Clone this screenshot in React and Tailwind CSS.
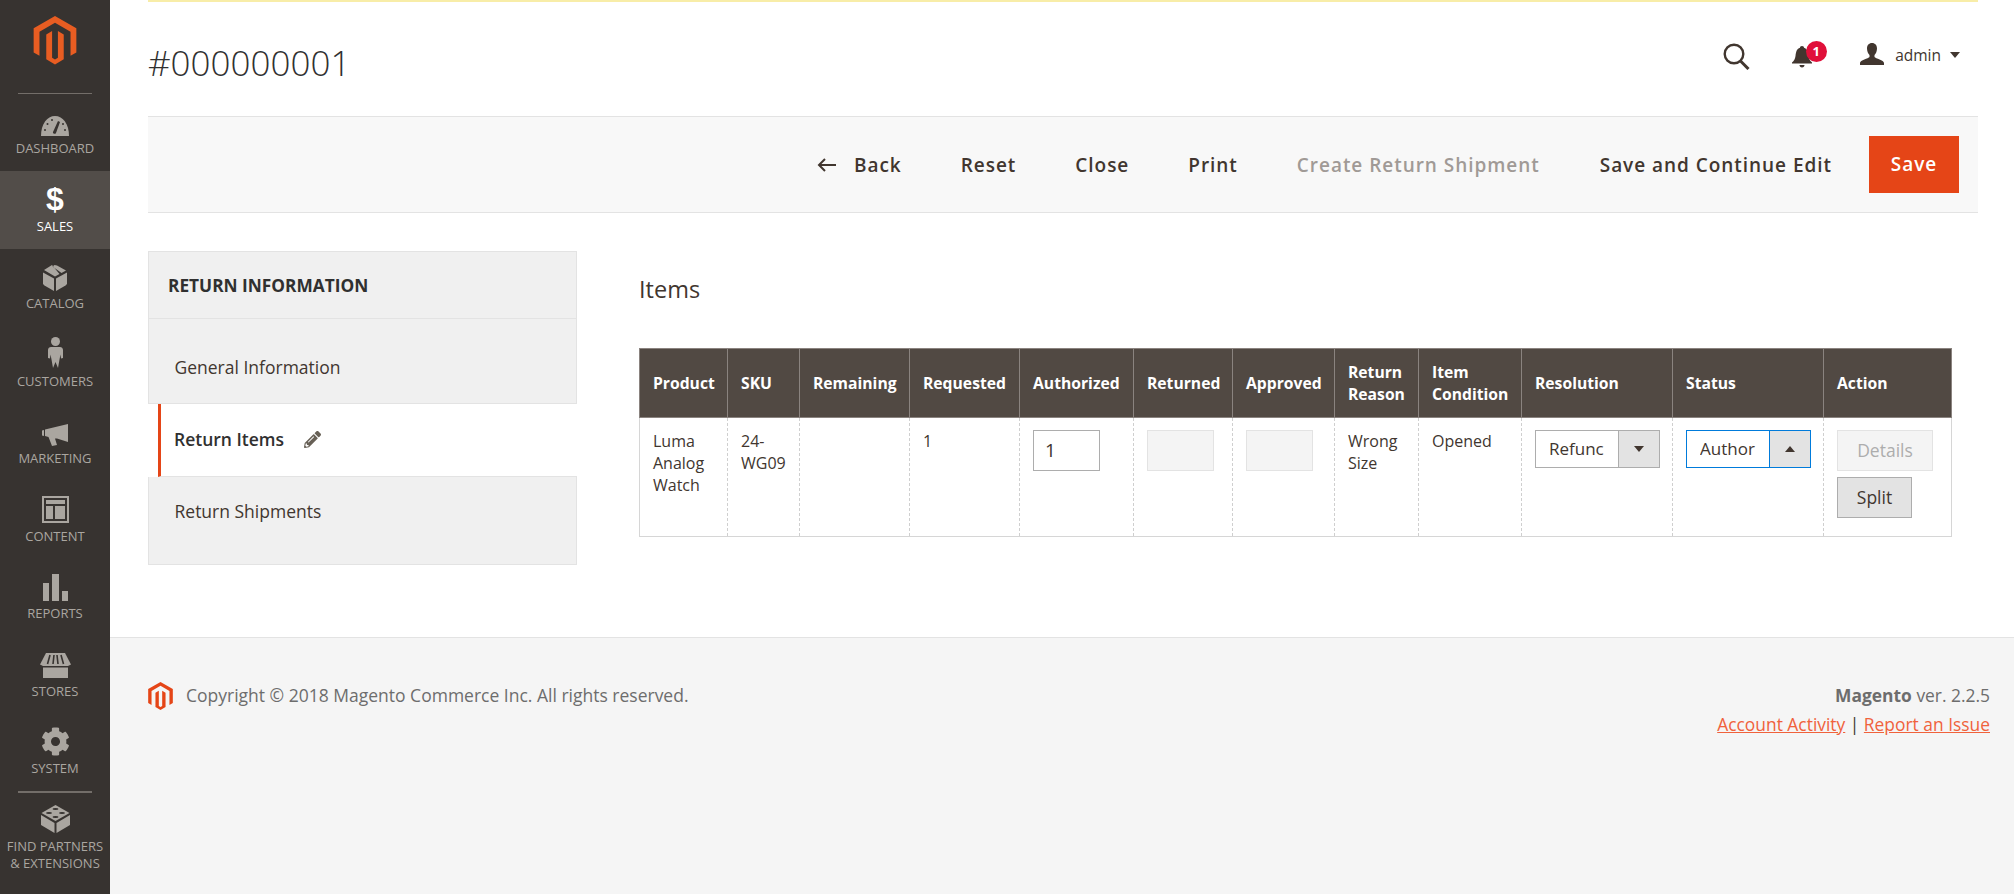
import React from 'react';
import { FaCog, FaPencilAlt } from 'react-icons/fa';

const G = '#aaa6a0';

const Logo = ({ className, color = '#eb5202' }) => (
  <svg viewBox="0 0 44 50" className={className} fill={color}>
    <path d="M22 0 44 12.6V37.5L38 41V16.1L22 6.9 6 16.1V41L0 37.5V12.6Z" />
    <path d="M19 15.5V43L22 44.8 25 43V15.5L31 19V44.6L22 50 13 44.6V19Z" />
  </svg>
);

const icons = {
  dashboard: (
    <svg width="28" height="20" viewBox="0 0 28 20">
      <path d="M0 20C0 8 6 0 14 0s14 8 14 20Z" fill={G} />
      <path d="M17 5l2 1-4 11c-.6 1.6-3.6.8-3-1Z" fill="#373330" />
      <g fill="#373330">
        <circle cx="4" cy="14" r="1" /><circle cx="6.5" cy="8" r="1" /><circle cx="11" cy="4" r="1" /><circle cx="22" cy="8" r="1" /><circle cx="24" cy="14" r="1" />
      </g>
    </svg>
  ),
  sales: (
    <span className="text-[32px] leading-[32px] font-extrabold text-white h-[32px] mb-[-2px] font-['Liberation_Sans',sans-serif]">$</span>
  ),
  catalog: (
    <svg width="24" height="26" viewBox="0 0 24 26" fill={G}>
      <path d="M0 7.5 11 13.5V26L1.5 20.5 0 19Z" />
      <path d="M13 13.5 24 7.5V19L22.5 20.5 13 26Z" />
      <path d="M9 0 1 5 12 11.5 16.5 9ZM11.5 0 14 .5 23 5.5 18.5 8 9.5 1.5Z" />
    </svg>
  ),
  customers: (
    <svg width="15" height="31" viewBox="0 0 15 31" fill={G}>
      <circle cx="7.5" cy="4.5" r="4.5" />
      <path d="M3 10h9c1.5 0 3 1 3 3v8l-2 .5-.5-4-1 5L10 31 7.500 25 5 31 3.500 22.500l-1-5-.5 4-2-.5v-8c0-2 1.500-3 3-3Z" />
    </svg>
  ),
  marketing: (
    <svg width="26" height="22" viewBox="0 0 26 22" fill={G}>
      <path d="M0 6.500 2 6v6L0 11.500Z" />
      <path d="M3 5.500 26 0V18L15 14.500H13L15 21 10 22 6.500 13 3 12Z" />
    </svg>
  ),
  content: (
    <svg width="27" height="27" viewBox="0 0 27 27">
      <path d="M0 0H27V27H0ZM2 2V25H25V2Z" fill={G} fillRule="evenodd" />
      <path d="M4 4H23V8H4ZM4 10H11V23H4ZM13 10H23V23H13Z" fill={G} />
    </svg>
  ),
  reports: (
    <svg width="25" height="27" viewBox="0 0 25 27" fill={G}>
      <rect x="0" y="9" width="6" height="18" />
      <rect x="9" y="0" width="7" height="27" />
      <rect x="19" y="17" width="6" height="10" />
    </svg>
  ),
  stores: (
    <svg width="31" height="25" viewBox="0 0 31 25" fill={G}>
      <path d="M6 0H25L31 11.500 28 13H3L0 11.500Z" />
      <path d="M3 14.500H28V25H3Z" />
      <path d="M10 2 7.500 11M14 2 13 11M17 2 18 11M21 2 23.500 11" stroke="#373330" strokeWidth="1.600" />
    </svg>
  ),
  system: <FaCog size={29} color={G} />,
  partners: (
    <svg width="29" height="29" viewBox="0 0 29 29" fill={G}>
      <path d="M14.500 1 28.500 9 14.500 17 .5 9Z" />
      <path d="M0 11 13.500 19V29L0 21Z" />
      <path d="M29 11 15.500 19V29L29 21Z" />
      <g fill="#373330">
        <ellipse cx="14.500" cy="5" rx="3" ry="1.100" /><ellipse cx="8" cy="9" rx="3" ry="1.100" /><ellipse cx="21" cy="9" rx="3" ry="1.100" /><ellipse cx="14.500" cy="13" rx="3" ry="1.100" />
      </g>
    </svg>
  ),
};

const navItems = [
  ['dashboard', 'DASHBOARD'],
  ['sales', 'SALES', true],
  ['catalog', 'CATALOG'],
  ['customers', 'CUSTOMERS'],
  ['marketing', 'MARKETING'],
  ['content', 'CONTENT'],
  ['reports', 'REPORTS'],
  ['stores', 'STORES'],
  ['system', 'SYSTEM'],
];

function Sidebar() {
  return (
    <aside className="w-[110px] shrink-0 bg-[#373330] flex flex-col">
      <div className="h-[93.5px] flex flex-col items-center">
        <Logo className="w-[44px] h-[50px] mt-[16px]" color="#e85d22" />
        <div className="mt-[28px] w-[74px] h-px bg-[#736e69]" />
      </div>
      {navItems.map(([k, label, active]) => (
        <div key={k} className={`h-[77.5px] pt-[11px] flex flex-col items-center ${active ? 'bg-[#524d49] text-white' : 'text-[#aaa6a0]'}`}>
          <div className="h-[31px] flex items-end justify-center">{icons[k]}</div>
          <div className="mt-[3.500px] text-[13px] leading-[18px]">{label}</div>
        </div>
      ))}
      <div className="h-[2px] w-[74px] mx-auto bg-[#736e69]" />
      <div className="flex flex-col items-center pt-[11px] text-[#aaa6a0]">
        {icons.partners}
        <div className="mt-[5px] text-[13px] leading-[17px] text-center whitespace-nowrap">FIND PARTNERS<br />&amp; EXTENSIONS</div>
      </div>
    </aside>
  );
}

function TopBar() {
  return (
    <div className="flex items-start justify-between h-[114px]">
      <h1 className="mt-[38px] text-[35px] leading-[46px] font-light text-[#303030]">#000000001</h1>
      <div className="flex items-center mt-[41px] mr-[18px] text-[#41362f]">
        <svg width="27" height="27" viewBox="0 0 27 27" fill="none" stroke="#41362f">
          <circle cx="11" cy="11" r="9.300" strokeWidth="2.400" />
          <path d="M17.500 18 25.500 26" strokeWidth="3" />
        </svg>
        <div className="relative ml-[42px] w-[20px] h-[24px]">
          <svg width="20" height="24" viewBox="0 0 20 24" fill="#41362f">
            <path d="M10 1c1.300 0 2 .8 2 1.800C15.500 4 16 7 16.500 11c.4 3 1.500 5 3.500 6.500v1H0v-1C2 16 3.100 14 3.500 11 4 7 4.500 4 8 2.800 8 1.800 8.700 1 10 1Z" />
            <path d="M7.500 20h5c0 1.500-1 2.500-2.500 2.500S7.500 21.500 7.500 20Z" />
          </svg>
          <span className="absolute left-[13.500px] top-[-4px] w-[21px] h-[21px] rounded-full bg-[#e0103a] text-white text-[13px] leading-[21px] font-bold text-center">1</span>
        </div>
        <svg width="24" height="22" viewBox="0 0 24 22" fill="#41362f" className="ml-[48px] mb-[5px]">
          <path d="M12 0c3.200 0 5 2.300 5 5.500 0 2.500-1 5-2.500 6.500v2c1 1.500 9.500 3 9.500 6v2H0v-2c0-3 8.500-4.500 9.500-6v-2C8 10.500 7 8 7 5.500 7 2.300 8.800 0 12 0Z" />
        </svg>
        <span className="ml-[11px] mb-[3px] text-[15.500px] leading-[22px]">admin</span>
        <span className="ml-[9px] mb-[3px] w-0 h-0 border-x-[5px] border-x-transparent border-t-[6px] border-t-[#41362f]" />
      </div>
    </div>
  );
}

function ActionBar() {
  const btn = 'text-[19px] font-semibold tracking-[0.96px] leading-[24px] text-[#41362f]';
  return (
    <div className="h-[97px] bg-[#f8f8f8] border-y border-[#e3e3e3] flex items-center justify-end pr-[19px] gap-[59px]">
      <span className={`${btn} flex items-center`}>
        <svg width="19" height="14" viewBox="0 0 19 14" fill="none" stroke="#41362f" strokeWidth="2" className="mr-[18px]">
          <path d="M19 7H2M8 1 2 7l6 6" />
        </svg>
        Back
      </span>
      <span className={btn}>Reset</span>
      <span className={btn}>Close</span>
      <span className={btn}>Print</span>
      <span className={`${btn} !text-[#a09a96] mr-[1px]`}>Create Return Shipment</span>
      <span className={btn}>Save and Continue Edit</span>
      <span className="ml-[-22px] w-[90px] h-[57px] bg-[#e54517] text-white text-[19px] font-semibold tracking-[0.96px] flex items-center justify-center">Save</span>
    </div>
  );
}

function Tabs() {
  return (
    <div className="w-[429px] shrink-0">
      <div className="h-[68px] bg-[#f0f0f0] border border-[#e3e3e3] flex items-center pl-[19px] pt-[2px] text-[17.3px] font-bold text-[#303030]">RETURN INFORMATION</div>
      <div className="h-[85px] bg-[#f0f0f0] border-x border-b border-[#e3e3e3] flex items-center pl-[25.500px] pt-[13px] text-[17.5px] text-[#41362f]">General Information</div>
      <div className="flex h-[73px]">
        <div className="w-[10px] bg-white" />
        <div className="flex-1 border-l-[3px] border-l-[#e54517] bg-white flex items-center pl-[13px] pb-[2px] border-b border-b-[#e3e3e3] text-[17.5px] font-semibold text-[#303030]">
          Return Items
          <FaPencilAlt size={17} color="#676056" className="ml-[20px]" />
        </div>
      </div>
      <div className="h-[88px] bg-[#f0f0f0] border-x border-b border-[#e3e3e3] flex items-start pl-[25.500px] pt-[22px] text-[17.5px] leading-[24px] text-[#41362f]">Return Shipments</div>
    </div>
  );
}

const heads = ['Product', 'SKU', 'Remaining', 'Requested', 'Authorized', 'Returned', 'Approved', 'Return Reason', 'Item Condition', 'Resolution', 'Status', 'Action'];

const Select = ({ text, open }) => (
  <div className={`w-[125px] h-[38px] flex bg-white border ${open ? 'border-[#007bdb]' : 'border-[#adadad]'}`}>
    <span className="flex-1 min-w-0 mx-[13px] overflow-hidden whitespace-nowrap text-[17px] leading-[36px]">{text}</span>
    <span className={`w-[41px] shrink-0 flex items-center justify-center bg-[#e3e3e3] border-l ${open ? 'border-l-[#007bdb]' : 'border-l-[#adadad]'}`}>
      <span className={`w-0 h-0 border-x-[5px] border-x-transparent ${open ? 'border-b-[6px] border-b-[#41362f]' : 'border-t-[6px] border-t-[#41362f]'}`} />
    </span>
  </div>
);

const Input = ({ value, disabled }) => (
  <div className={`w-[67px] h-[41px] border pl-[11px] text-[19px] leading-[39px] ${disabled ? 'bg-[#f4f4f4] border-[#e3e3e3]' : 'bg-white border-[#adadad]'}`}>{value}</div>
);

function ItemsTable() {
  const td = 'align-top pt-[12px] px-[13px] border-r border-dashed border-r-[#cfcfcf] last:border-r-0';
  const tx = 'leading-[22px]';
  return (
    <table className="w-[1312px] table-fixed border-collapse text-[16px] text-[#41362f]">
      <colgroup>
        <col className="w-[88px]" />
        <col className="w-[72px]" />
        <col className="w-[110px]" />
        <col className="w-[110px]" />
        <col className="w-[114px]" />
        <col className="w-[99px]" />
        <col className="w-[102px]" />
        <col className="w-[84px]" />
        <col className="w-[103px]" />
        <col className="w-[151px]" />
        <col className="w-[151px]" />
        <col className="w-[128px]" />
      </colgroup>
      <thead>
        <tr className="h-[69px] bg-[#514943] text-white text-left">
          {heads.map((h) => (
            <th key={h} className="px-[13px] font-bold text-[15.700px] leading-[22px] border border-[#8a837f]">{h}</th>
          ))}
        </tr>
      </thead>
      <tbody>
        <tr className="h-[119px] border-x border-b border-[#d6d6d6]">
          <td className={td}><div className={tx}>Luma Analog Watch</div></td>
          <td className={td}><div className={tx}>24-WG09</div></td>
          <td className={td}></td>
          <td className={td}><div className={tx}>1</div></td>
          <td className={td}><Input value="1" /></td>
          <td className={td}><Input disabled /></td>
          <td className={td}><Input disabled /></td>
          <td className={td}><div className={tx}>Wrong Size</div></td>
          <td className={td}><div className={tx}>Opened</div></td>
          <td className={td}><Select text="Refunc" /></td>
          <td className={td}><Select text="Author" open /></td>
          <td className={td}>
            <div className="w-[96px] h-[41px] bg-[#f4f4f4] border border-[#e3e3e3] text-[#adadad] text-[17.500px] flex items-center justify-center">Details</div>
            <div className="mt-[6px] w-[75px] h-[41px] bg-[#e3e3e3] border border-[#adadad] text-[17.500px] text-[#41362f] flex items-center justify-center">Split</div>
          </td>
        </tr>
      </tbody>
    </table>
  );
}

function Footer() {
  return (
    <footer className="flex-1 bg-[#f5f5f5] border-t border-[#e3e3e3] pl-[38px] pr-[24px] mt-[72px] flex justify-between items-start pt-[43px]">
      <div className="flex items-center text-[17.500px] text-[#6d6d6d] leading-[29px]">
        <Logo className="w-[25px] h-[28px] mr-[13px]" color="#e54517" />
        Copyright © 2018 Magento Commerce Inc. All rights reserved.
      </div>
      <div className="text-right text-[17.400px] leading-[29px] text-[#6d6d6d]">
        <div><b className="font-bold">Magento</b> ver. 2.2.5</div>
        <div>
          <span className="underline text-[#f0623c]">Account Activity</span>
          <span className="text-[#41362f]"> | </span>
          <span className="underline text-[#f0623c]">Report an Issue</span>
        </div>
      </div>
    </footer>
  );
}

export default function App() {
  return (
    <div className="flex w-[2014px] h-[894px] bg-white font-['Open_Sans',sans-serif] overflow-hidden">
      <Sidebar />
      <main className="flex-1 flex flex-col min-w-0">
        <div className="pl-[38px] pr-[36px]">
          <div className="h-[2px] bg-[#f8eda8]" />
          <TopBar />
          <ActionBar />
          <div className="flex mt-[38px]">
            <Tabs />
            <div className="ml-[62px] flex-1">
              <h2 className="mt-[23px] text-[23.500px] leading-[30px] text-[#41362f]">Items</h2>
              <div className="mt-[44px]"><ItemsTable /></div>
            </div>
          </div>
        </div>
        <Footer />
      </main>
    </div>
  );
}
